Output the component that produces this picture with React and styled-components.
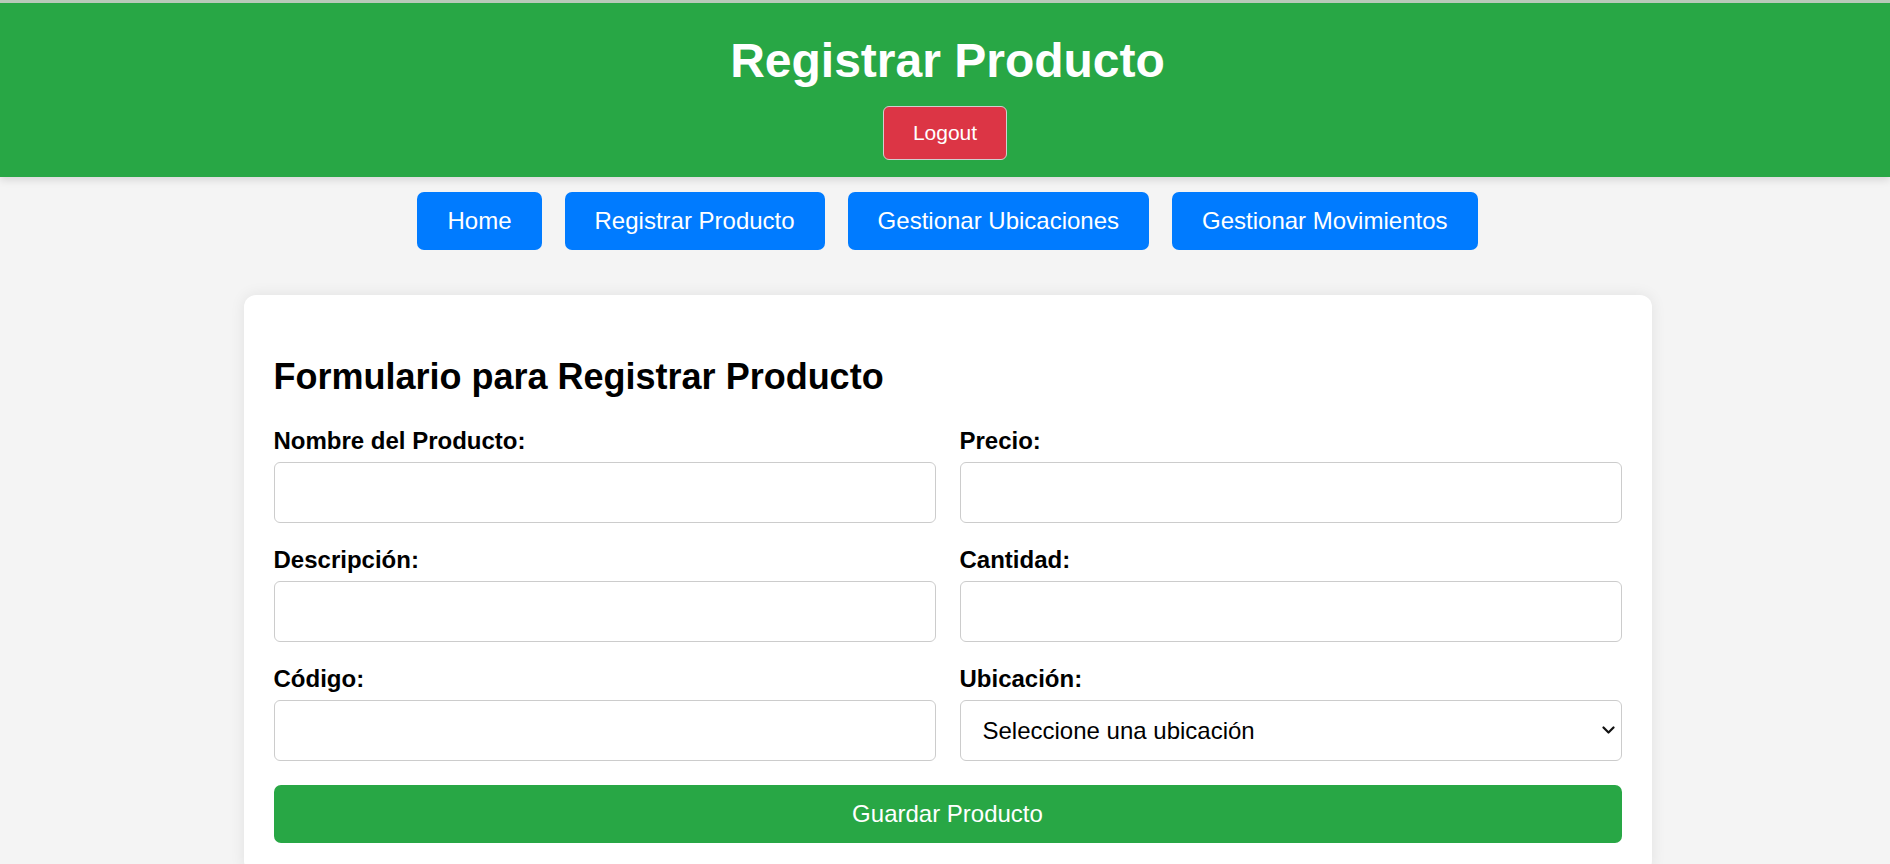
import React from 'react';
import styled, { createGlobalStyle } from 'styled-components';

const GlobalStyle = createGlobalStyle`
  body {
    margin: 0;
    padding-left: 5px;
    background-color: #f4f4f4;
    font-family: "Liberation Sans", Arial, sans-serif;
  }
  * {
    box-sizing: border-box;
  }
`;

const Header = styled.header`
  margin-left: -5px;
  background-color: #28a745;
  color: #fff;
  text-align: center;
  border-top: 3px solid #b9cab9;
  padding: 30px 0 17.5px;
  box-shadow: 0 3px 8px rgba(0, 0, 0, 0.12);

  h1 {
    margin: 0 0 17.5px;
    padding-left: 5px;
    font-size: 48px;
    line-height: 55px;
  }
`;

const LogoutButton = styled.button`
  background-color: #dc3545;
  color: #fff;
  font-family: inherit;
  font-size: 21px;
  line-height: 24px;
  padding: 14px 29px;
  border: 1.5px solid #cfcfcf;
  border-radius: 6px;
  cursor: pointer;
`;

const Nav = styled.nav`
  display: flex;
  justify-content: center;
  gap: 23px;
  margin-top: 15px;
`;

const NavButton = styled.button`
  background-color: #007bff;
  color: #fff;
  font-family: inherit;
  font-size: 24px;
  line-height: 27.6px;
  padding: 15px 30px;
  border: none;
  border-radius: 7px;
  cursor: pointer;
`;

const Card = styled.main`
  width: 1408px;
  margin: 45px auto;
  padding: 30px;
  background-color: #fff;
  border-radius: 12px;
  box-shadow: 0 0 15px rgba(0, 0, 0, 0.08);

  h2 {
    margin: 31px 0 30px;
    font-size: 36px;
    line-height: 41px;
  }
`;

const FormGrid = styled.div`
  display: grid;
  grid-template-columns: 1fr 1fr;
  column-gap: 24px;
`;

const Group = styled.div`
  margin-bottom: 23px;

  label {
    display: block;
    font-weight: bold;
    font-size: 24px;
    line-height: 27.6px;
    margin-bottom: 7.5px;
  }
`;

const fieldStyle = `
  width: 100%;
  height: 61px;
  padding: 0 15px;
  font-family: inherit;
  font-size: 24px;
  color: #000;
  background-color: #fff;
  border: 1.5px solid #ccc;
  border-radius: 6px;
`;

const Input = styled.input`
  ${fieldStyle}
`;

const SelectWrap = styled.div`
  position: relative;

  svg {
    position: absolute;
    right: 7px;
    top: 26px;
    pointer-events: none;
  }
`;

const Select = styled.select`
  ${fieldStyle}
  appearance: none;
  padding: 0 30px 0 22px;
`;

const SaveButton = styled.button`
  width: 100%;
  margin-top: 1.5px;
  background-color: #28a745;
  color: #fff;
  font-family: inherit;
  font-size: 24px;
  line-height: 27.6px;
  padding: 15px;
  border: none;
  border-radius: 7px;
  cursor: pointer;
`;

const fields = [
  { id: 'nombre', label: 'Nombre del Producto:' },
  { id: 'precio', label: 'Precio:' },
  { id: 'descripcion', label: 'Descripción:' },
  { id: 'cantidad', label: 'Cantidad:' },
  { id: 'codigo', label: 'Código:' }
];

const links = ['Home', 'Registrar Producto', 'Gestionar Ubicaciones', 'Gestionar Movimientos'];

export default function App() {
  return (
    <>
      <GlobalStyle />
      <Header>
        <h1>Registrar Producto</h1>
        <LogoutButton>Logout</LogoutButton>
      </Header>
      <Nav>
        {links.map(link => (
          <NavButton key={link}>{link}</NavButton>
        ))}
      </Nav>
      <Card>
        <h2>Formulario para Registrar Producto</h2>
        <form onSubmit={e => e.preventDefault()}>
          <FormGrid>
            {fields.map(field => (
              <Group key={field.id}>
                <label htmlFor={field.id}>{field.label}</label>
                <Input id={field.id} type="text" />
              </Group>
            ))}
            <Group>
              <label htmlFor="ubicacion">Ubicación:</label>
              <SelectWrap>
                <Select id="ubicacion" defaultValue="">
                  <option value="">Seleccione una ubicación</option>
                </Select>
                <svg width="13" height="9" viewBox="0 0 13 9">
                  <polyline
                    points="1.5,1.5 6.5,6.5 11.5,1.5"
                    fill="none"
                    stroke="#111"
                    strokeWidth="2.2"
                    strokeLinecap="round"
                    strokeLinejoin="round"
                  />
                </svg>
              </SelectWrap>
            </Group>
          </FormGrid>
          <SaveButton type="submit">Guardar Producto</SaveButton>
        </form>
      </Card>
    </>
  );
}
